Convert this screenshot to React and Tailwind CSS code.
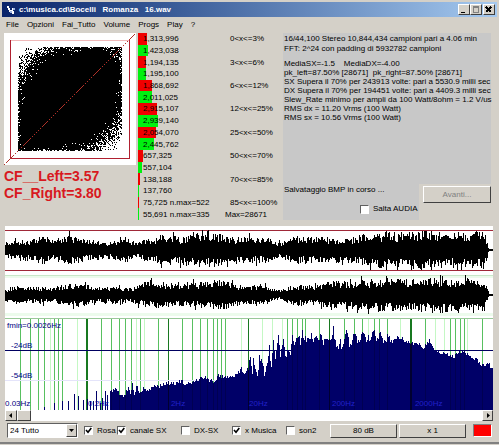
import * as React from "react";
import clsx from "clsx";

const menuItems = ["File", "Opzioni", "Fai_Tutto", "Volume", "Progs", "Play", "?"];

const levels = [
  { count: "1,313,996", bar: 9, range: "0<x<=3%" },
  { count: "1,423,038", bar: 10 },
  { count: "1,194,135", bar: 8, range: "3<x<=6%" },
  { count: "1,195,100", bar: 8 },
  { count: "1,868,692", bar: 14, range: "6<x<=12%" },
  { count: "2,011,025", bar: 14 },
  { count: "2,915,107", bar: 19, range: "12<x<=25%" },
  { count: "2,939,140", bar: 20 },
  { count: "2,054,070", bar: 18, range: "25<x<=50%" },
  { count: "2,445,762", bar: 16 },
  { count: "657,325", bar: 5, range: "50<x<=70%" },
  { count: "557,104", bar: 4 },
  { count: "138,188", bar: 2, range: "70<x<=85%" },
  { count: "137,760", bar: 1 },
  { count: "75,725 n.max=522", bar: 1, range: "85<x<=100%" },
  { count: "55,691 n.max=335", bar: 1, range: "Max=28671", wide: true },
];

const fileInfo = [
  "16/44,100 Stereo 10,844,434 campioni pari a 4.06 min",
  "FFT: 2^24 con padding di 5932782 campioni",
];

const stats = [
  "MediaSX=-1.5    MediaDX=-4.00",
  "pk_left=87.50% [28671]  pk_right=87.50% [28671]",
  "SX Supera il 70% per 243913 volte: pari a 5530.9 milli sec",
  "DX Supera il 70% per 194451 volte: pari a 4409.3 milli sec",
  "Slew_Rate minimo per ampli da 100 Watt/8ohm = 1.2 V/us",
  "RMS dx = 11.20 Vrms (100 Watt)",
  "RMS sx = 10.56 Vrms (100 Watt)",
];

// small seeded generator, so the drawings are the same on every render
const makeRandom = (seed) => () => {
  seed = (seed + 0x6d2b79f5) | 0;
  let t = Math.imul(seed ^ (seed >>> 15), 1 | seed);
  t = (t + Math.imul(t ^ (t >>> 7), 61 | t)) ^ t;
  return ((t ^ (t >>> 14)) >>> 0) / 4294967296;
};

const interpolate = (points, x) => {
  for (let i = 1; i < points.length; i++) {
    const [x0, y0] = points[i - 1];
    const [x1, y1] = points[i];
    if (x <= x1) return y0 + ((y1 - y0) * (x - x0)) / (x1 - x0);
  }
  return points[points.length - 1][1];
};

const scatterPath = () => {
  const rnd = makeRandom(11);
  let d = "";
  for (let y = 0; y < 104; y++) {
    for (let x = 0; x < 104; x++) {
      const t = Math.abs((x + y) / 103 - 1);
      const edge = Math.min(x, y, 103 - x, 103 - y);
      let p = t > 0.56 ? Math.pow((t - 0.56) / 0.4, 1.3) : 0;
      if (edge < 1) p += 0.2;
      else if (edge < 3) p += 0.08;
      else if (edge < 8 && t > 0.35) p += 0.06;
      if (Math.hypot(103 - x, y) < 16) p += 0.12;
      if (rnd() < p) d += `M${x + 14} ${y + 14}h1v1h-1z`;
    }
  }
  return d;
};

const envelopeLeft = [
  [0, 7], [10, 9], [28, 11], [38, 14], [46, 8], [58, 14], [72, 14], [80, 10],
  [95, 9], [104, 7], [118, 13], [130, 7], [140, 10], [160, 15], [175, 12],
  [195, 16], [212, 15], [230, 11], [245, 13], [262, 12], [275, 7], [290, 13],
  [310, 12], [330, 12], [350, 12], [365, 16], [385, 17], [400, 16], [420, 18],
  [440, 16], [460, 17], [480, 17], [485, 1], [489, 1],
];

const envelopeRight = [
  [0, 6], [12, 9], [28, 8], [45, 7], [60, 10], [75, 11], [92, 7], [104, 8],
  [118, 8], [128, 7], [140, 12], [160, 12], [180, 10], [195, 12], [212, 15],
  [230, 10], [245, 9], [262, 9], [274, 4], [290, 10], [310, 9], [330, 13],
  [350, 13], [370, 15], [390, 15], [410, 15], [430, 17], [450, 15], [470, 16],
  [480, 14], [485, 1], [489, 1],
];

const wavePath = (envelope, mid, limit, seed) => {
  const rnd = makeRandom(seed);
  let d = "";
  for (let x = 0; x < 489; x++) {
    const amp = interpolate(envelope, x);
    const spike = () => 0.5 + 0.6 * rnd() + (rnd() > 0.85 ? 0.4 * rnd() : 0);
    const up = Math.max(1, Math.round(Math.min(limit, amp * spike())));
    const down = Math.max(0, Math.round(Math.min(limit, amp * spike())));
    d += `M${x} ${mid - up}h1v${up + down}h-1z`;
  }
  return d;
};

const sparseBars = [
  [39, 3], [49, 7], [57, 9], [63, 9], [69, 16], [73, 14], [78, 10], [82, 11],
  [85, 9], [88, 9], [91, 19], [95, 7], [97, 12], [100, 19], [102, 15],
];

const spectrum = [
  [105, 18], [110, 22], [115, 14], [120, 16], [123, 22], [125, 17], [127, 26],
  [129, 16], [131, 24], [135, 17], [139, 22], [143, 18], [148, 24], [155, 24],
  [161, 27], [170, 27], [176, 29], [180, 24], [186, 28], [195, 32], [199, 33],
  [205, 29], [210, 29], [212, 34], [220, 33], [230, 34], [236, 42], [239, 37],
  [244, 40], [246, 55], [248, 39], [249, 56], [251, 38], [254, 38], [255, 54],
  [257, 48], [260, 37], [262, 42], [265, 63], [267, 42], [269, 72], [271, 50],
  [274, 74], [276, 54], [279, 74], [281, 54], [284, 60], [286, 56], [288, 76],
  [290, 66], [294, 75], [296, 68], [298, 78], [301, 70], [305, 74], [310, 71],
  [316, 73], [319, 68], [323, 74], [325, 67], [329, 80], [332, 61], [336, 68],
  [338, 61], [342, 81], [345, 65], [350, 76], [353, 67], [358, 78], [363, 70],
  [370, 77], [373, 70], [377, 78], [379, 64], [383, 74], [388, 68], [393, 75],
  [400, 69], [407, 67], [413, 66], [420, 63], [425, 70], [430, 60], [436, 57],
  [444, 55], [450, 54], [454, 57], [460, 59], [465, 53], [472, 50], [480, 43],
  [483, 47], [489, 41],
];

const spectrumPath = () => {
  const rnd = makeRandom(5);
  let d = "";
  sparseBars.forEach(([x, h]) => {
    d += `M${x} ${91 - h}h1v${h}h-1z`;
  });
  for (let x = 105; x < 489; x++) {
    const jitter = x > 240 && x < 400 ? 8 : 4;
    const h = Math.round(interpolate(spectrum, x) + (rnd() - 0.5) * jitter);
    d += `M${x} ${91 - h}h1v${h}h-1z`;
  }
  return d;
};

const gridGreen = [
  15, 25, 33, 39, 49, 53, 57, 96, 106, 114, 120, 126, 135, 153, 177, 187, 195,
  202, 208, 212, 216, 220, 283, 288, 293, 298, 301, 315, 340, 350, 358, 370,
  375, 383, 421, 446, 451, 456, 460, 478,
];
const gridPale = [45, 72, 131, 139, 236, 258, 268, 278, 364, 396, 431, 440, 463];
const gridDark = [[81, 2], [163, 1], [243, 2], [325, 1], [406, 2]];

const gridPath = (xs) => xs.map((x) => `M${x} 0h1v91h-1z`).join("");

const frequencies = [
  { label: "0.03Hz", place: "left-0", color: "text-[#000080]" },
  { label: "0.2Hz", place: "left-[17%]", color: "text-[#0000a8]" },
  { label: "2Hz", place: "left-[34%]", color: "text-[#2020c8]" },
  { label: "20Hz", place: "left-[50%]", color: "text-[#2020c8]" },
  { label: "200Hz", place: "left-[67%]", color: "text-[#2020c8]" },
  { label: "2000Hz", place: "left-[84%]", color: "text-[#2020c8]" },
];

const raised = "border border-t-white border-l-white border-r-[#404040] border-b-[#404040] bg-[#d4d0c8]";

const TitleButton = ({ label, children }) => (
  <button
    aria-label={label}
    className={clsx(raised, "flex h-[11px] w-[12px] items-center justify-center")}
  >
    <svg viewBox="0 0 8 8" className="size-2" shapeRendering="crispEdges">
      {children}
    </svg>
  </button>
);

const TitleBar = () => (
  <header className="flex h-[15px] items-center bg-linear-to-r from-[#0a246a] to-[#a6caf0] pr-[2px] pl-1">
    <svg viewBox="0 0 10 10" className="mr-[3px] size-[10px]" shapeRendering="crispEdges">
      <path d="M1 1h2v2h1v2h2v-2h1v3h1v3h-2v-2h-3v-2h-1v-2h-1z" fill="#fff" />
      <path d="M4 6h2v2h-2zM7 3h2v2h-2z" fill="#9fb4e0" />
    </svg>
    <h1 className="flex-1 text-[8px] font-bold whitespace-pre text-white">
      {"c:\\musica.cd\\Bocelli   Romanza   16.wav"}
    </h1>
    <div className="flex">
      <TitleButton label="Riduci a icona">
        <path d="M1 6h4v1H1z" fill="#000" />
      </TitleButton>
      <TitleButton label="Ingrandisci">
        <path d="M1 0h6v7H1zM2 2v4h4V2z" fill="#808080" fillRule="evenodd" />
      </TitleButton>
      <div className="ml-px flex">
        <TitleButton label="Chiudi">
          <path d="M1 1l5 5M6 1L1 6" fill="none" stroke="#000" strokeWidth="1.500" />
        </TitleButton>
      </div>
    </div>
  </header>
);

const MenuBar = () => (
  <nav className="flex h-[15px] items-center gap-[8px] pl-1">
    {menuItems.map((item) => (
      <button key={item} className="leading-3">
        {item}
      </button>
    ))}
  </nav>
);

const Scatter = () => (
  <svg viewBox="0 0 132 132" className="h-[132px] w-[132px] bg-white" shapeRendering="crispEdges">
    <rect x="14" y="14" width="104" height="104" fill="#000" />
    <path d={scatterPath()} fill="#fff" />
    <path d="M6.500 7V125.500H125.500V7" fill="none" stroke="#b02030" />
    <path d="M7 7.500H125" stroke="#f0b8b8" />
    <path d="M0 132L132 0" stroke="#b03028" strokeDasharray="2 1" />
  </svg>
);

const LevelsTable = () => (
  <table className="h-[187px] w-[143px] table-fixed border-collapse whitespace-nowrap">
    <tbody>
      {levels.map((level, i) => (
        <tr key={level.count}>
          <td className="relative w-[87px] p-0 leading-[11px]">
            <div
              className={clsx(
                "absolute inset-y-0 left-0",
                i % 2 ? "bg-[#00f010]" : "bg-[#f00000]"
              )}
              style={{ width: level.bar }}
            />
            <span className="relative pl-[5px]">{level.count}</span>
          </td>
          <td className={clsx("p-0 leading-[11px]", !level.wide && "pl-[5px]")}>
            {level.range}
          </td>
        </tr>
      ))}
    </tbody>
  </table>
);

const Check = ({ label, checked, className }) => (
  <label className={clsx("flex items-center gap-1", className)}>
    <span className="relative flex">
      <input
        type="checkbox"
        defaultChecked={checked}
        className="peer size-[9px] appearance-none border border-t-[#606060] border-r-white border-b-white border-l-[#606060] bg-white"
      />
      <svg
        viewBox="0 0 9 9"
        className="pointer-events-none absolute inset-0 hidden size-[9px] peer-checked:block"
      >
        <path d="M2 4l2 2.200L7.300 2" fill="none" stroke="#000" strokeWidth="1.600" />
      </svg>
    </span>
    {label}
  </label>
);

const InfoPanel = () => (
  <section className="flex min-w-0 flex-1 flex-col whitespace-pre">
    <div className="flex-1 bg-[#c8c8c8] pt-px pl-px">
      {fileInfo.map((line) => (
        <p key={line} className="leading-[10px]">
          {line}
        </p>
      ))}
      <div className="pt-[5px]">
        {stats.map((line) => (
          <p key={line} className="leading-[9px]">
            {line}
          </p>
        ))}
      </div>
    </div>
    <div className="flex justify-between">
      <div className="w-[136px] bg-[#c8c8c8] pb-[5px] pl-px">
        <p className="leading-3">Salvataggio BMP in corso ...</p>
        <Check label="Salta AUDIA" className="mt-[7px] ml-[76px]" />
      </div>
      <button
        disabled
        className={clsx(raised, "mt-[2px] h-[17px] w-[68px] text-[#808080]")}
      >
        Avanti...
      </button>
    </div>
  </section>
);

const Waveforms = () => (
  <svg
    viewBox="0 0 489 93"
    preserveAspectRatio="none"
    className="block h-[93px] w-full bg-white"
    shapeRendering="crispEdges"
  >
    <path d="M0 4h489v1H0zM0 44h489v1H0z" fill="#a02838" />
    <path d="M0 49h489v3H0zM0 87h489v3H0z" fill="#ecfbec" />
    <path d="M0 49h489v1H0z" fill="#c8e8c8" />
    <path d="M0 92h489v1H0z" fill="#98c898" />
    <path d={wavePath(envelopeLeft, 24, 20, 21)} />
    <path d={wavePath(envelopeRight, 69, 20, 77)} />
  </svg>
);

const Spectrum = () => (
  <div className="relative">
    <svg
      viewBox="0 0 489 91"
      preserveAspectRatio="none"
      className="block h-[91px] w-full bg-white"
      shapeRendering="crispEdges"
    >
      <path d={gridPath(gridPale)} fill="#c4f8c4" />
      <path d={gridPath(gridGreen)} fill="#58c060" />
      {gridDark.map(([x, w]) => (
        <rect key={x} x={x} width={w} height="91" fill="#187820" />
      ))}
      <path d="M0 31h489v1H0z" fill="#000060" />
      <path d="M0 61h489v1H0z" fill="#e4e4fa" />
      <path d={spectrumPath()} fill="#000068" />
      <g opacity="0.3">
        <path d={gridPath(gridGreen.filter((x) => x > 105))} fill="#000020" clipPath="url(#bars)" />
      </g>
      <clipPath id="bars">
        <path d={spectrumPath()} />
      </clipPath>
      {gridDark.slice(1).map(([x, w]) => (
        <rect key={x} x={x} width={w} height="91" fill="#000018" opacity="0.7" clipPath="url(#bars)" />
      ))}
    </svg>
    <div className="absolute inset-0 leading-[10px] text-[#000080]">
      <span className="absolute top-[2px] left-[2px]">fmin=0.0026Hz</span>
      <span className="absolute top-[22px] left-[6px]">-24dB</span>
      <span className="absolute top-[52px] left-[6px]">-54dB</span>
      {frequencies.map(({ label, place, color }) => (
        <span key={label} className={clsx("absolute bottom-px", place, color)}>
          {label}
        </span>
      ))}
    </div>
  </div>
);

const ScrollBar = () => (
  <div className="flex h-[11px] justify-between bg-white">
    <div className="flex">
      <button aria-label="Indietro" className={clsx(raised, "flex w-3 items-center justify-center")}>
        <svg viewBox="0 0 4 5" className="h-[5px] w-1">
          <path d="M3 0v5L0 2.500z" />
        </svg>
      </button>
      <div className={clsx(raised, "w-[14px]")} />
    </div>
    <button aria-label="Avanti" className={clsx(raised, "flex w-[11px] items-center justify-center")}>
      <svg viewBox="0 0 4 5" className="h-[5px] w-1">
        <path d="M1 0v5l3-2.500z" />
      </svg>
    </button>
  </div>
);

const Controls = () => (
  <footer className="flex items-center pt-[2px] pr-px pb-1 pl-[2px]">
    <div className="relative mr-[6px]">
      <select
        aria-label="Banda"
        className="block h-[15px] w-[71px] appearance-none border border-t-[#606060] border-r-white border-b-white border-l-[#606060] bg-white pl-[2px] leading-3"
      >
        <option>24 Tutto</option>
      </select>
      <span
        className={clsx(
          raised,
          "pointer-events-none absolute top-px right-px flex h-[13px] w-[11px] items-center justify-center"
        )}
      >
        <svg viewBox="0 0 5 3" className="h-[3px] w-[5px]">
          <path d="M0 0h5L2.500 3z" />
        </svg>
      </span>
    </div>
    <Check label="Rosa" checked className="w-[33px]" />
    <Check label="canale SX" checked className="w-16" />
    <Check label="DX-SX" className="w-[51px]" />
    <Check label="x Musica" checked className="w-[54px]" />
    <Check label="son2" className="w-[44px]" />
    <div className="flex flex-1 gap-[2px]">
      <button className={clsx(raised, "h-[14px] flex-1")}>80 dB</button>
      <button className={clsx(raised, "h-[14px] flex-1")}>x 1</button>
    </div>
    <button
      aria-label="Stop"
      className="ml-[7px] h-[13px] w-[19px] border border-t-[#808080] border-r-white border-b-white border-l-[#808080] bg-[#ff0000]"
    />
  </footer>
);

export default function App() {
  return (
    <div className="min-h-screen bg-[#d4d0c8] font-['Liberation_Sans',Arial,sans-serif] text-[8px] text-black">
      <main className="border-b-2 border-b-[#808080] pt-[2px] pr-[2px] pl-[2px]">
        <TitleBar />
        <MenuBar />
        <div className="flex gap-[2px] pt-px pr-[6px] pl-[2px]">
          <div>
            <Scatter />
            <div className="pt-[3px] text-[14px] leading-[17px] font-bold text-[#d81820]">
              <p>CF__Left=3.57</p>
              <p>CF_Right=3.80</p>
            </div>
          </div>
          <LevelsTable />
          <InfoPanel />
        </div>
        <div className="pt-[6px] pr-1 pl-[3px]">
          <Waveforms />
          <Spectrum />
          <ScrollBar />
          <Controls />
        </div>
      </main>
    </div>
  );
}
